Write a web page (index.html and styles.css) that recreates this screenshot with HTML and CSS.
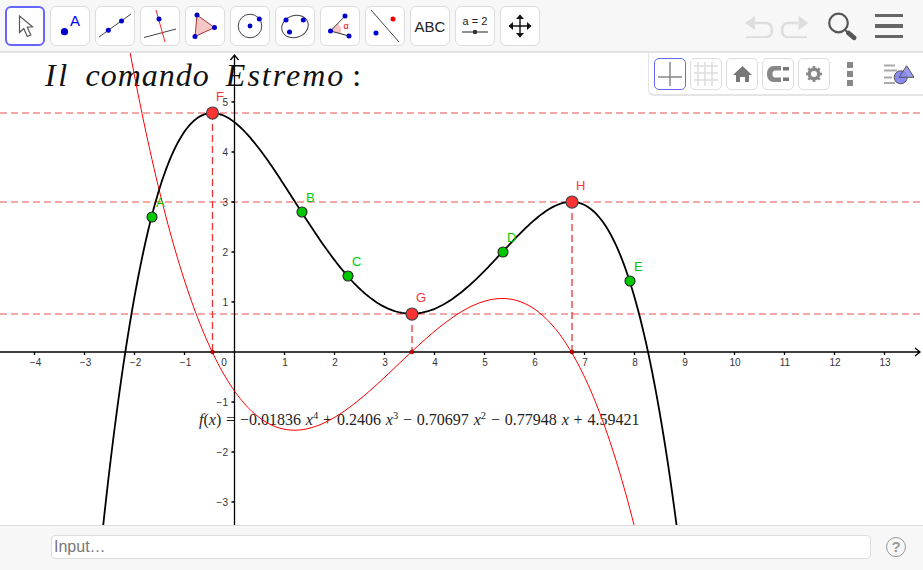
FILE: index.html
```html
<!DOCTYPE html>
<html lang="en">
<head>
    <meta charset="UTF-8">
    <meta name="viewport" content="width=device-width, initial-scale=1.0">
    <title>Il comando Estremo</title>
    <link rel="stylesheet" href="styles.css">
</head>
<body>
    <header class="toolbar">
        <div class="tools">
            <button class="tool tool-active">
                <svg viewBox="1 1 38 38"><path d="M14.500 10V26.500L18.800 22.500L22.300 30.500L25.800 29L22.300 21.200L27.500 20.800Z" fill="#fff" stroke="#555" stroke-width="1.200"/></svg>
            </button>
            <button class="tool">
                <svg viewBox="1 1 38 38"><circle cx="14.500" cy="25.700" r="3.600" fill="#0000cc"/><text x="20" y="20" class="icon-a">A</text></svg>
            </button>
            <button class="tool">
                <svg viewBox="1 1 38 38"><line x1="4" y1="31" x2="36" y2="8" stroke="#444"/><circle cx="13.300" cy="24.300" r="2.500" fill="#0000cc"/><circle cx="26.500" cy="15" r="2.500" fill="#0000cc"/></svg>
            </button>
            <button class="tool">
                <svg viewBox="1 1 38 38"><line x1="4" y1="31.500" x2="36" y2="23" stroke="#444"/><line x1="16" y1="4" x2="25" y2="36" stroke="#f22"/><circle cx="19" cy="13" r="2.500" fill="#0000cc"/></svg>
            </button>
            <button class="tool">
                <svg viewBox="1 1 38 38"><path d="M12 9L29.500 21.500L10 30.500Z" fill="#f4c6c6" stroke="#a33"/><circle cx="12" cy="9" r="2.500" fill="#0000cc"/><circle cx="29.500" cy="21.500" r="2.500" fill="#0000cc"/><circle cx="10" cy="30.500" r="2.500" fill="#0000cc"/></svg>
            </button>
            <button class="tool">
                <svg viewBox="1 1 38 38"><circle cx="20" cy="20" r="11.800" fill="none" stroke="#444"/><circle cx="20" cy="20" r="2.400" fill="#0000cc"/><circle cx="29.300" cy="13" r="2.500" fill="#0000cc"/></svg>
            </button>
            <button class="tool">
                <svg viewBox="1 1 38 38"><ellipse cx="20" cy="20.500" rx="13.500" ry="11" transform="rotate(-20 20 20.500)" fill="none" stroke="#444"/><circle cx="11" cy="14" r="2.500" fill="#0000cc"/><circle cx="14.500" cy="26" r="2.500" fill="#0000cc"/><circle cx="28.300" cy="14" r="2.500" fill="#0000cc"/></svg>
            </button>
            <button class="tool">
                <svg viewBox="1 1 38 38"><path d="M10.500 25L18 17.500A11 11 0 0 1 21 27.800Z" fill="#f8c4c4"/><path d="M25 10L10.500 25L29 30" fill="none" stroke="#333"/><circle cx="25" cy="10" r="2.500" fill="#0000cc"/><circle cx="10.500" cy="25" r="2.500" fill="#0000cc"/><circle cx="29" cy="30" r="2.500" fill="#0000cc"/><text x="23.500" y="23" class="icon-alpha">α</text></svg>
            </button>
            <button class="tool">
                <svg viewBox="1 1 38 38"><line x1="6" y1="4" x2="34" y2="36" stroke="#444"/><circle cx="28" cy="13" r="2.500" fill="#e00"/><circle cx="11" cy="27" r="2.500" fill="#0000cc"/></svg>
            </button>
            <button class="tool tool-abc">ABC</button>
            <button class="tool">
                <svg viewBox="1 1 38 38"><text x="20" y="19" class="icon-slider">a = 2</text><line x1="7" y1="26" x2="33" y2="26" stroke="#555" stroke-width="1.300"/><circle cx="20" cy="26" r="2.300" fill="#333"/></svg>
            </button>
            <button class="tool">
                <svg viewBox="1 1 38 38"><path d="M20 9V31M9 20H31" stroke="#111" stroke-width="1.400"/><path d="M20 8.500L16 13H24ZM20 31.500L16 27H24ZM8.500 20L13 16V24ZM31.500 20L27 16V24Z" fill="#111"/></svg>
            </button>
        </div>
        <div class="actions">
            <svg class="undo" viewBox="0 -2 28 24"><path d="M10 7H20C25 7 27 10 27 14C27 19 24 21.500 20 21.500H1" fill="none" stroke="#ddd" stroke-width="2.500"/><path d="M0 7L10 0V14Z" fill="#ddd"/></svg>
            <svg class="redo" viewBox="0 -2 28 24"><path d="M17 7H8C3 7 1 10 1 14C1 19 4 21.500 8 21.500H26" fill="none" stroke="#ddd" stroke-width="2.500"/><path d="M27.500 7L17.500 0V14Z" fill="#ddd"/></svg>
            <svg class="search" viewBox="0 0 30 30"><circle cx="10.500" cy="12" r="9.300" fill="none" stroke="#555" stroke-width="2.200"/><path d="M17 19L20 21.500" stroke="#555" stroke-width="2"/><path d="M20.500 22L26 26.800" stroke="#555" stroke-width="4.800" stroke-linecap="round"/></svg>
            <div class="menu"><span></span><span></span><span></span></div>
        </div>
    </header>

    <main class="canvas">
        <h1 class="graph-title"><span class="title-il">Il</span> <span>comando</span> <span class="title-est">Estremo</span> <b>:</b></h1>
        <p class="formula"><i>f</i>(<i>x</i>) = −0.01836 <i>x</i><sup>4</sup> + 0.2406 <i>x</i><sup>3</sup> − 0.70697 <i>x</i><sup>2</sup> − 0.77948 <i>x</i> + 4.59421</p>

        <svg id="graph" class="graph" viewBox="0 53 923 472">
            <g class="guide-h">
                <line x1="0" y1="113" x2="923" y2="113"/>
                <line x1="0" y1="202" x2="923" y2="202"/>
                <line x1="0" y1="314" x2="923" y2="314"/>
            </g>
            <g class="guide-v">
                <line x1="212.500" y1="113" x2="212.500" y2="352"/>
                <line x1="412" y1="314" x2="412" y2="352"/>
                <line x1="572" y1="202" x2="572" y2="352"/>
            </g>
            <g id="axes"></g>
            <path id="derivative" class="curve-red"/>
            <path id="quartic" class="curve-black"/>
            <g class="foot">
                <circle cx="212.500" cy="352" r="2"/>
                <circle cx="412" cy="352" r="2"/>
                <circle cx="572" cy="352" r="2"/>
            </g>
            <g class="pt-green">
                <circle cx="152" cy="217" r="5"/>
                <circle cx="302" cy="212" r="5"/>
                <circle cx="348" cy="276" r="5"/>
                <circle cx="503" cy="252" r="5"/>
                <circle cx="630" cy="281" r="5"/>
            </g>
            <g class="pt-red">
                <circle cx="212.500" cy="113" r="6"/>
                <circle cx="412" cy="314" r="6"/>
                <circle cx="572" cy="202" r="6"/>
            </g>
            <g class="lbl-green">
                <text x="156" y="207">A</text>
                <text x="306" y="202">B</text>
                <text x="352" y="266">C</text>
                <text x="507" y="242">D</text>
                <text x="634" y="271">E</text>
            </g>
            <g class="lbl-red">
                <text x="216" y="101">F</text>
                <text x="416" y="302">G</text>
                <text x="576" y="190">H</text>
            </g>
        </svg>

        <aside class="stylebar">
            <button class="style-btn style-btn-active">
                <svg viewBox="1 1 30 30"><path d="M16 4V28M4 19H28" stroke="#888" stroke-width="1.500"/></svg>
            </button>
            <button class="style-btn">
                <svg viewBox="1 1 30 30"><path d="M8 4V28M15 4V28M22 4V28M4 8H28M4 15H28M4 22H28" stroke="#ddd" stroke-width="1.500"/></svg>
            </button>
            <button class="style-btn">
                <svg viewBox="1 1 30 30"><path d="M16.500 8L7 17H10V24H14V19H19V24H23V17H26Z" fill="#777"/></svg>
            </button>
            <button class="style-btn">
                <svg viewBox="1 1 30 30"><path d="M19 8H12C7.500 8 5 11.500 5 16C5 20.500 7.500 24 12 24H19V19.500H13C11.500 19.500 10.500 18 10.500 16C10.500 14 11.500 12.500 13 12.500H19Z" fill="#888"/><path d="M21 9H27V12.500H21ZM21 19.500H27V23H21Z" fill="#777"/></svg>
            </button>
            <button class="style-btn">
                <svg viewBox="1 1 30 30"><circle cx="16" cy="16" r="5" fill="none" stroke="#888" stroke-width="3"/><path d="M16 8V24M8 16H24M10.300 10.300L21.700 21.700M21.700 10.300L10.300 21.700" stroke="#888" stroke-width="2.600"/><circle cx="16" cy="16" r="3" fill="#fff"/></svg>
            </button>
            <div class="dots"><span></span><span></span><span></span></div>
            <svg class="algebra" viewBox="0 0 32 22"><path d="M0 1.500H11M0 6.500H13M0 13.500H8M0 19H11" stroke="#aaa" stroke-width="1.800"/><circle cx="16.700" cy="13.300" r="6.500" fill="#8a8af0" stroke="#555"/><path d="M22.700 1.700L30 13.300H15Z" fill="#8a8af0" fill-opacity=".85" stroke="#555"/></svg>
        </aside>
    </main>

    <footer class="inputbar">
        <input class="input-field" type="text" placeholder="Input…">
        <span class="help">?</span>
    </footer>

    <script src="graph.js"></script>
</body>
</html>
```

FILE: styles.css
```css
* {
    box-sizing: border-box;
}

html, body {
    height: 100%;
}

body {
    margin: 0;
    display: flex;
    flex-direction: column;
    overflow: hidden;
    font-family: "Liberation Sans", Arial, sans-serif;
    background: #fff;
}

button {
    padding: 0;
    font: inherit;
}

/* top toolbar */
.toolbar {
    flex: 0 0 53px;
    display: flex;
    justify-content: space-between;
    padding: 6px 20px 0 5px;
    background: #f7f7f7;
    border-bottom: 2px solid #e2e2e2;
}

.tools {
    display: flex;
    gap: 5px;
}

.tool {
    width: 40px;
    height: 40px;
    background: #fff;
    border: 1px solid #ddd;
    border-radius: 6px;
}

.tool svg {
    display: block;
    width: 38px;
    height: 38px;
}

.tool-active {
    border: 2px solid #6666ff;
}

.tool-active svg {
    margin: -1px;
}

.tool-abc {
    font-size: 15px;
    color: #222;
}

.icon-a {
    font: 15px "Liberation Sans", sans-serif;
    fill: #0000ee;
}

.icon-alpha {
    font: 9px "Liberation Sans", sans-serif;
    fill: #e00;
}

.icon-slider {
    font: 11px "Liberation Sans", sans-serif;
    fill: #222;
    text-anchor: middle;
}

.actions {
    display: flex;
    align-items: center;
    height: 40px;
}

.undo, .redo {
    width: 28px;
    height: 24px;
}

.redo {
    margin-left: 8px;
}

.search {
    width: 30px;
    height: 30px;
    margin-left: 19px;
}

.menu {
    display: flex;
    flex-direction: column;
    gap: 7px;
    width: 28px;
    margin-left: 17px;
}

.menu span {
    height: 3.500px;
    background: #666;
}

/* graphics view */
.canvas {
    flex: 1;
    position: relative;
    min-height: 0;
    background: #fff;
}

.graph {
    position: relative;
    display: block;
    width: 100%;
    height: 100%;
}

.graph-title {
    position: absolute;
    left: 45px;
    top: 4px;
    margin: 0;
    font: italic 400 32px "Liberation Serif", serif;
    color: #111;
    word-spacing: 7px;
    letter-spacing: 1px;
    white-space: nowrap;
}

.title-il {
    letter-spacing: 2.500px;
}

.title-est {
    letter-spacing: 2px;
}

.graph-title b {
    margin-left: -9px;
    font-weight: 400;
    font-style: normal;
}

.formula {
    position: absolute;
    left: 199px;
    top: 358px;
    margin: 0;
    font: 16px "Liberation Serif", serif;
    color: #222;
    word-spacing: .85px;
    white-space: nowrap;
}

.formula sup {
    font-size: 10.500px;
    line-height: 0;
}

.guide-h line {
    stroke: #f08a8a;
    stroke-width: 1.300;
    stroke-dasharray: 7 4;
}

.guide-v line {
    stroke: #ee3333;
    stroke-width: 1.300;
    stroke-dasharray: 7 4;
}

.axis {
    stroke: #000;
    stroke-width: 1.300;
    fill: none;
}

.tick-label {
    font: 10px "Liberation Sans", sans-serif;
    fill: #333;
}

.curve-black {
    fill: none;
    stroke: #000;
    stroke-width: 1.800;
}

.curve-red {
    fill: none;
    stroke: #f00;
    stroke-width: 1;
}

.foot circle {
    fill: #c00;
    stroke: #600;
    stroke-width: .5;
}

.pt-green circle {
    fill: #00c800;
    stroke: #222;
    stroke-width: 1.100;
}

.pt-red circle {
    fill: #ff3333;
    stroke: #444;
    stroke-width: 1.100;
}

.lbl-green text, .lbl-red text {
    font: 13px "Liberation Sans", sans-serif;
}

.lbl-green text {
    fill: #00c800;
}

.lbl-red text {
    fill: #ff3333;
}

/* style bar over the graph */
.stylebar {
    position: absolute;
    top: 0;
    right: 0;
    width: 275px;
    height: 43px;
    display: flex;
    align-items: flex-start;
    gap: 4px;
    padding: 5px 0 0 5px;
    background: #fff;
    border-bottom: 2px solid #e4e4e4;
    border-left: 1px solid #e4e4e4;
    border-bottom-left-radius: 6px;
}

.style-btn {
    width: 32px;
    height: 32px;
    background: #fff;
    border: 1px solid #ddd;
    border-radius: 5px;
}

.style-btn svg {
    display: block;
    width: 30px;
    height: 30px;
}

.style-btn-active {
    border-color: #6666ff;
}

.dots {
    display: flex;
    flex-direction: column;
    gap: 3px;
    width: 6px;
    margin: 4px 0 0 13px;
}

.dots span {
    height: 6px;
    background: #888;
}

.algebra {
    width: 32px;
    height: 22px;
    margin: 6px 0 0 27px;
}

/* input bar */
.inputbar {
    flex: 0 0 45px;
    display: flex;
    align-items: flex-start;
    padding: 9px 16px 0 51px;
    background: #f7f7f7;
    border-top: 1px solid #ddd;
}

.input-field {
    width: 820px;
    height: 24px;
    padding: 0 2px;
    font: 16px "Liberation Sans", sans-serif;
    background: #fff;
    border: 1px solid #ddd;
    border-radius: 4px;
    outline: none;
}

.input-field::placeholder {
    color: #777;
}

.help {
    width: 20px;
    height: 20px;
    margin: 2px 0 0 15px;
    font-size: 15px;
    font-weight: 700;
    line-height: 17px;
    text-align: center;
    color: #999;
    border: 1.500px solid #999;
    border-radius: 50%;
}
```

FILE: graph.js
```js
// page coordinates of the origin, 50px per unit
const X0 = 234.5;
const Y0 = 352;
const UNIT = 50;
const NS = 'http://www.w3.org/2000/svg';

function f(x) {
    return -0.01836 * x ** 4 + 0.2406 * x ** 3 - 0.70697 * x ** 2 - 0.77948 * x + 4.59421;
}

function df(x) {
    return -0.07344 * x ** 3 + 0.7218 * x ** 2 - 1.41394 * x - 0.77948;
}

function plot(fn) {
    let d = '';
    for (let px = 90; px <= 700; px += 2) {
        const y = Y0 - UNIT * fn((px - X0) / UNIT);
        d += (d ? 'L' : 'M') + px + ' ' + y.toFixed(1);
    }
    return d;
}

document.getElementById('quartic').setAttribute('d', plot(f));
document.getElementById('derivative').setAttribute('d', plot(df));

const axes = document.getElementById('axes');

function add(tag, attrs, text) {
    const el = document.createElementNS(NS, tag);
    for (const k in attrs) el.setAttribute(k, attrs[k]);
    if (text) el.textContent = text;
    axes.appendChild(el);
}

// axis lines with open arrow heads
let d = 'M0 ' + Y0 + 'H920M915 ' + (Y0 - 4) + 'L920 ' + Y0 + 'L915 ' + (Y0 + 4);
d += 'M' + X0 + ' 525V55M' + (X0 - 4) + ' 60L' + X0 + ' 55L' + (X0 + 4) + ' 60';

for (let i = -4; i <= 13; i++) {
    if (i === 0) continue;
    const px = X0 + i * UNIT;
    d += 'M' + px + ' ' + Y0 + 'v3';
    add('text', { x: px + (i < 0 ? 1 : 0.5), y: Y0 + 14, 'text-anchor': 'middle', class: 'tick-label' },
        (i < 0 ? '−' : '') + Math.abs(i));
}
add('text', { x: X0 - 10.5, y: Y0 + 14, 'text-anchor': 'middle', class: 'tick-label' }, '0');

for (let j = -3; j <= 5; j++) {
    if (j === 0) continue;
    const py = Y0 - j * UNIT;
    d += 'M' + (X0 - 3) + ' ' + py + 'H' + X0;
    add('text', { x: X0 - 6.5, y: py + 3.5, 'text-anchor': 'end', class: 'tick-label' },
        (j < 0 ? '−' : '') + Math.abs(j));
}
add('path', { d: d, class: 'axis' });
```
